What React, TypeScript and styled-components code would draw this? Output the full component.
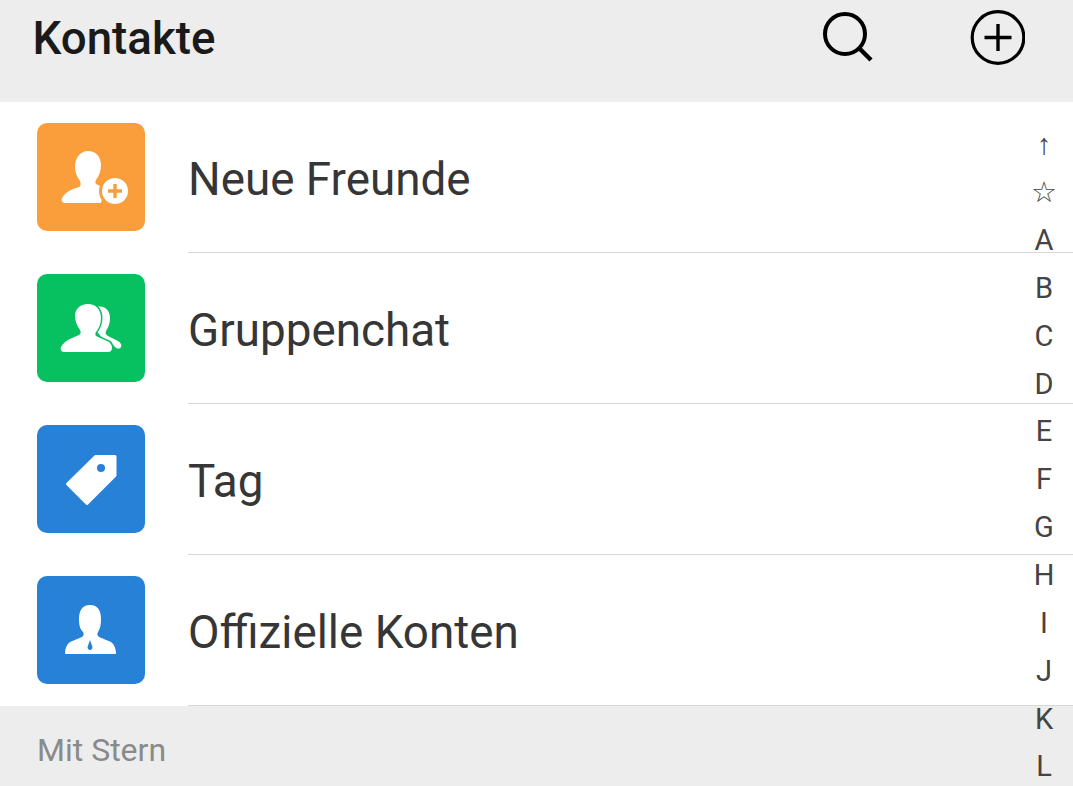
import React from 'react';
import styled, { createGlobalStyle } from 'styled-components';

const GlobalStyle = createGlobalStyle`
  html, body {
    margin: 0;
    padding: 0;
    background: #ffffff;
    overflow: hidden;
  }
  body {
    font-family: Roboto, "Liberation Sans", sans-serif;
  }
`;

const Page = styled.div`
  position: relative;
  width: 1073px;
  height: 786px;
  overflow: hidden;
  background: #ededed;
`;

const Header = styled.header`
  height: 102px;
  box-sizing: border-box;
  display: flex;
  align-items: flex-start;
  background: #ededed;
  border-bottom: 1px solid #f1f1f1;
`;

const Title = styled.h1`
  flex: 1;
  margin: 13px 0 0 32.5px;
  font-size: 45.7px;
  line-height: 52px;
  font-weight: 500;
  color: #1a1a1a;
`;

const HeaderIcon = styled.svg<{ $gap: number }>`
  display: block;
  flex: none;
  width: 60px;
  height: 70px;
  margin-right: ${({ $gap }) => $gap}px;
`;

const List = styled.ul`
  margin: 0;
  padding: 0;
  list-style: none;
  background: #ffffff;
`;

const Row = styled.li`
  height: 151px;
  display: flex;
  align-items: stretch;
  padding-left: 37px;
`;

const IconTile = styled.div<{ $color: string }>`
  flex: none;
  width: 108px;
  height: 108px;
  margin-top: 21px;
  border-radius: 10px;
  background: ${({ $color }) => $color};

  svg {
    display: block;
    width: 108px;
    height: 108px;
  }
`;

const RowBody = styled.div`
  flex: 1;
  margin-left: 43px;
  box-sizing: border-box;
  border-bottom: 1px solid #d8d8d8;
  display: flex;
  align-items: center;
  padding-top: 4px;
`;

const RowLabel = styled.span`
  font-size: 45.8px;
  color: #363636;
`;

const SectionLabel = styled.div`
  padding: 24px 0 0 37px;
  font-size: 32px;
  line-height: 40px;
  color: #8a8a8a;
`;

const IndexBar = styled.div`
  position: absolute;
  top: 121.4px;
  right: 0;
  width: 58px;
  display: flex;
  flex-direction: column;
  align-items: center;
`;

const IndexItem = styled.span`
  height: 47.85px;
  line-height: 47.85px;
  font-size: 29px;
  color: #444444;
`;

const indexItems = ['↑', '☆', 'A', 'B', 'C', 'D', 'E', 'F', 'G', 'H', 'I', 'J', 'K', 'L'];

const AddFriendIcon = ({ color }: { color: string }) => (
  <svg viewBox="0 0 108 108">
    <path
      fill="#fff"
      d="M51 28c8 0 13 6 13 14 0 6-2 11-5 15-1 2-1 4 2 5l7 3-4 15H28c-3 0-4-3-3-5 2-4 6-7 11-9l6-2c2-1 2-4 1-6-3-4-5-9-5-14 0-9 5-16 13-16z"
    />
    <circle cx="78" cy="68" r="16" fill={color} />
    <circle cx="78" cy="68" r="13" fill="#fff" />
    <path d="M78 61v14M71 68h14" stroke={color} strokeWidth="3.4" fill="none" />
  </svg>
);

const GroupIcon = ({ color }: { color: string }) => (
  <svg viewBox="0 0 108 108">
    <path
      fill="#fff"
      d="M60 33c8-2 13 4 13 11 0 6-2 10-4 13-1 2 0 4 2 5l10 5c3 2 4 4 3 6-1 2-4 2-6 0-2-3-6-5-11-7l-10-12z"
    />
    <path
      fill="#fff"
      stroke={color}
      strokeWidth="3"
      paintOrder="stroke"
      d="M51 30c8 0 13 6 13 14 0 6-2 10-5 14-1 2-1 4 2 5l9 4c3 1 5 4 5 7 0 2-1 4-4 4H27c-3 0-4-3-3-5 2-4 6-7 11-9l7-3c2-1 2-3 1-5-3-4-5-9-5-14 0-7 5-12 13-12z"
    />
  </svg>
);

const TagIcon = ({ color }: { color: string }) => (
  <svg viewBox="0 0 108 108">
    <path
      fill="#fff"
      stroke="#fff"
      strokeWidth="3"
      strokeLinejoin="round"
      d="M78 31.500H58.500L30.500 59 50 78.500l28-28z"
    />
    <circle cx="64" cy="43" r="4" fill={color} />
  </svg>
);

const OfficialIcon = ({ color }: { color: string }) => (
  <svg viewBox="0 0 108 108">
    <path
      fill="#fff"
      d="M53 29c8 0 11 6 11 14 0 6-1 10-3 13-1 2-1 3 1 5l12 5c3 2 5 7 5 11 0 1-1 1-2 1H30c-1 0-2 0-2-1 0-4 2-9 5-11l12-5c2-2 2-3 1-5-3-3-4-7-4-13 0-8 3-14 11-14z"
    />
    <path fill={color} d="M53 64l-2.500 7c0 4 5 4 5 0z" />
  </svg>
);

const rows = [
  { label: 'Neue Freunde', color: '#fa9d3b', Icon: AddFriendIcon },
  { label: 'Gruppenchat', color: '#07c160', Icon: GroupIcon },
  { label: 'Tag', color: '#2782d7', Icon: TagIcon },
  { label: 'Offizielle Konten', color: '#2782d7', Icon: OfficialIcon },
];

export default function App() {
  return (
    <Page>
      <GlobalStyle />
      <Header>
        <Title>Kontakte</Title>
        <HeaderIcon $gap={85} viewBox="0 0 60 70">
          <circle cx="25" cy="34" r="20" fill="none" stroke="#000" strokeWidth="4" />
          <path d="M39 48l12 12" stroke="#000" strokeWidth="4.4" fill="none" />
        </HeaderIcon>
        <HeaderIcon $gap={48} viewBox="0 0 60 70">
          <circle cx="33" cy="37.500" r="25.8" fill="none" stroke="#000" strokeWidth="3.2" />
          <path d="M33 24v27M19.500 37.500h27" stroke="#000" strokeWidth="3.4" fill="none" />
        </HeaderIcon>
      </Header>
      <List>
        {rows.map(({ label, color, Icon }) => (
          <Row key={label}>
            <IconTile $color={color}>
              <Icon color={color} />
            </IconTile>
            <RowBody>
              <RowLabel>{label}</RowLabel>
            </RowBody>
          </Row>
        ))}
      </List>
      <SectionLabel>Mit Stern</SectionLabel>
      <IndexBar>
        {indexItems.map((item) => (
          <IndexItem key={item}>{item}</IndexItem>
        ))}
      </IndexBar>
    </Page>
  );
}
